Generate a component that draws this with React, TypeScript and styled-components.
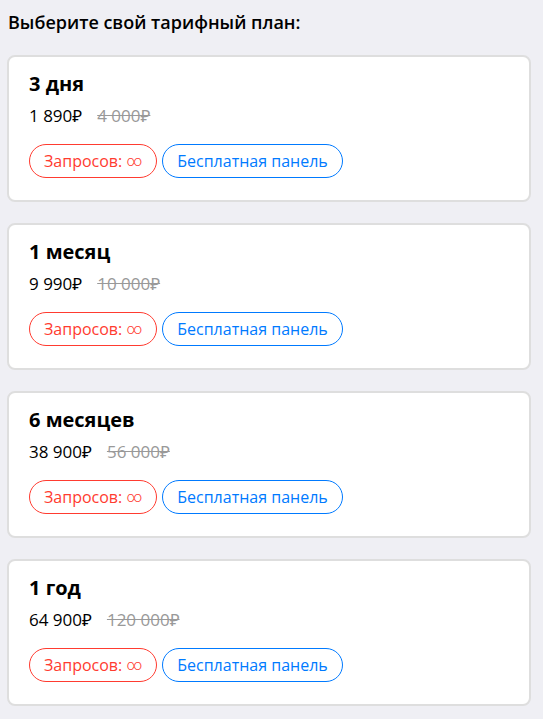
import React from 'react'
import styled, { createGlobalStyle } from 'styled-components'

interface Plan {
  title: string
  price: string
  oldPrice: string
}

const plans: Plan[] = [
  { title: '3 дня', price: '1 890₽', oldPrice: '4 000₽' },
  { title: '1 месяц', price: '9 990₽', oldPrice: '10 000₽' },
  { title: '6 месяцев', price: '38 900₽', oldPrice: '56 000₽' },
  { title: '1 год', price: '64 900₽', oldPrice: '120 000₽' },
]

export default function App(): JSX.Element {
  return (
    <>
      <GlobalStyle />
      <Container>
        <Heading>Выберите свой тарифный план:</Heading>
        <PlanList>
          {plans.map((plan, idx) => (
            <PlanCard key={idx}>
              <PlanTitle>{plan.title}</PlanTitle>
              <PriceRow>
                <Price>{plan.price}</Price>
                <OldPrice>{plan.oldPrice}</OldPrice>
              </PriceRow>
              <Chips>
                <Chip $color="#ff3b30">
                  Запросов: <Infinity>∞</Infinity>
                </Chip>
                <Chip $color="#007aff">Бесплатная панель</Chip>
              </Chips>
            </PlanCard>
          ))}
        </PlanList>
      </Container>
    </>
  )
}

const GlobalStyle = createGlobalStyle`
  body {
    margin: 0;
    background: #efeff4;
    font-family: "Open Sans", "Noto Sans", sans-serif;
    color: #000;
  }
`

const Container = styled.div`
  padding: 10px 12px 12px 7px;
`

const Heading = styled.h1`
  margin: 0 0 0 1px;
  font-size: 18px;
  line-height: 24px;
  font-weight: 600;
`

const PlanList = styled.div`
  display: flex;
  flex-direction: column;
  gap: 21px;
  margin-top: 21px;
`

const PlanCard = styled.div`
  background: #fff;
  border: 2px solid #dedede;
  border-radius: 8px;
  padding: 14px 20px 22px 20px;
`

const PlanTitle = styled.div`
  font-size: 20px;
  line-height: 26px;
  font-weight: 700;
`

const PriceRow = styled.div`
  display: flex;
  align-items: baseline;
  gap: 15px;
  margin-top: 8px;
  font-size: 17px;
  line-height: 22px;
`

const Price = styled.span``

const OldPrice = styled.span`
  color: #999;
  text-decoration: line-through;
`

const Chips = styled.div`
  display: flex;
  gap: 5px;
  margin-top: 17px;
`

const Chip = styled.span<{ $color: string }>`
  display: inline-flex;
  align-items: center;
  height: 34px;
  box-sizing: border-box;
  padding: 0 14px;
  border: 1px solid ${(p) => p.$color};
  border-radius: 17px;
  color: ${(p) => p.$color};
  font-size: 16px;
  white-space: pre;
`

const Infinity = styled.span`
  font-family: Roboto, sans-serif;
  font-size: 15px;
  font-weight: 300;
`
